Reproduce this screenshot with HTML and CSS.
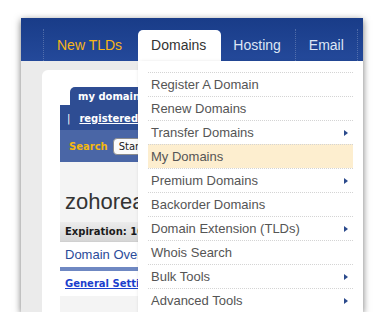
FILE: index.html
```html
<!DOCTYPE html>
<html>
  <head>
    <meta charset="UTF-8">
    <title>Domains</title>
	<link rel="stylesheet" href="styles.css">
  </head>
  <body>

	<div class="shot">

	<div class="nav">
		<span class="sep"></span>
		<a class="nav-item new-tlds">New TLDs</a>
		<a class="nav-item tab">Domains</a>
		<a class="nav-item hosting">Hosting</a>
		<span class="sep"></span>
		<a class="nav-item email">Email</a>
		<span class="sep"></span>
	</div>

	<div class="main">
		<div class="panel">
			<div class="acct">
				<div class="acct-tab">my domains</div>
				<div class="acct-links"><span class="bar">|</span><a>registered domains</a></div>
				<div class="acct-search">
					<span class="search-label">Search</span>
					<button class="start">Start</button>
				</div>
				<div class="acct-body">
					<h1 class="domain">zohoreach.com</h1>
					<div class="expire">Expiration: 10/24/2015</div>
					<div class="overview">Domain Overview</div>
					<div class="rule"></div>
					<div class="settings"><a>General Settings</a></div>
				</div>
			</div>
		</div>

		<ul class="menu">
			<li>Register A Domain</li>
			<li>Renew Domains</li>
			<li class="more">Transfer Domains<i></i></li>
			<li class="on">My Domains</li>
			<li class="more">Premium Domains<i></i></li>
			<li>Backorder Domains</li>
			<li class="more">Domain Extension (TLDs)<i></i></li>
			<li>Whois Search</li>
			<li class="more">Bulk Tools<i></i></li>
			<li class="more">Advanced Tools<i></i></li>
		</ul>
	</div>

	</div>

  </body>
</html>
```

FILE: styles.css
```css
 * {
	margin: 0px;
	padding: 0px;
	box-sizing: border-box;
 }
 body {
	background-color: #ffffff;
	font-family: "Liberation Sans", Arial, sans-serif;
 }
 .shot {
	margin: 18px 0 0 21px;
	width: 342px;
	height: 294px;
	background-color: #ebebeb;
	box-shadow: 0 2px 7px rgba(0, 0, 0, 0.55);
	display: flex;
	flex-direction: column;
	overflow: hidden;
 }

 /* top bar */
 .nav {
	height: 43px;
	flex: none;
	display: flex;
	align-items: flex-end;
	padding-left: 22px;
	background: linear-gradient(#193c88, #24499a);
 }
 .sep {
	width: 1px;
	height: 32px;
	border-left: 1px dotted rgba(255, 255, 255, 0.22);
 }
 .nav-item {
	height: 31px;
	line-height: 31px;
	font-size: 14px;
	color: #dde6f5;
	white-space: nowrap;
 }
 .new-tlds {
	color: #f7b518;
	padding: 0 16px 0 13px;
 }
 .tab {
	background-color: #ffffff;
	color: #333333;
	border-radius: 5px 5px 0 0;
	padding: 0 15px 0 13px;
 }
 .hosting {
	padding: 0 14px 0 12px;
 }
 .email {
	padding: 0 13px 0 13px;
 }

 /* page below the bar */
 .main {
	flex: 1;
	display: flex;
	position: relative;
	padding-left: 21px;
 }
 .panel {
	flex: 1;
	margin-top: 9px;
	background-color: #ffffff;
	border-top-left-radius: 6px;
	padding: 17px 0 0 18px;
 }
 .acct {
	width: 78px;
	height: 100%;
	overflow: hidden;
	display: flex;
	flex-direction: column;
	font-family: "DejaVu Sans", Verdana, sans-serif;
	font-size: 10px;
	font-weight: bold;
 }
 .acct-tab {
	margin-left: 10px;
	height: 18px;
	line-height: 19px;
	padding-left: 8px;
	color: #ffffff;
	background-color: #2e4d93;
	border-top-left-radius: 5px;
	white-space: nowrap;
 }
 .acct-links {
	height: 25px;
	line-height: 27px;
	padding-left: 7px;
	color: #ffffff;
	background-color: #2e4d93;
	white-space: nowrap;
 }
 .acct-links .bar {
	font-weight: normal;
	margin-right: 9px;
 }
 .acct-links a {
	text-decoration: underline;
 }
 .acct-search {
	height: 32px;
	display: flex;
	align-items: center;
	padding-left: 9px;
	background-color: #4a66a6;
	white-space: nowrap;
 }
 .search-label {
	color: #f5b90f;
	margin-right: 5px;
	margin-top: 1px;
 }
 .start {
	flex: none;
	height: 17px;
	padding: 0 5px;
	border: 1px solid #8d8d8d;
	border-radius: 4px;
	background-color: #fbfbfb;
	font-family: "DejaVu Sans", Verdana, sans-serif;
	font-size: 10px;
	color: #222222;
 }
 .acct-body {
	flex: 1;
	background-color: #f4f4f4;
 }
 .domain {
	font-family: "Liberation Sans", Arial, sans-serif;
	font-weight: normal;
	font-size: 22px;
	line-height: 22px;
	color: #333333;
	padding-left: 5px;
	margin: 29px 0 9px;
	white-space: nowrap;
 }
 .expire {
	height: 20px;
	line-height: 20px;
	padding-left: 5px;
	color: #1a1a1a;
	background: linear-gradient(#ececec, #d6d6d6);
	border-bottom: 1px solid #d0d0d0;
	white-space: nowrap;
 }
 .overview {
	height: 25px;
	line-height: 25px;
	padding-left: 5px;
	font-family: "Liberation Sans", Arial, sans-serif;
	font-weight: normal;
	font-size: 13px;
	color: #2b4b99;
	background-color: #ffffff;
	white-space: nowrap;
 }
 .rule {
	height: 4px;
	background-color: #6f88c2;
 }
 .settings {
	height: 25px;
	line-height: 25px;
	padding-left: 5px;
	color: #1c3fcd;
	background-color: #ffffff;
	white-space: nowrap;
 }
 .settings a {
	text-decoration: underline;
 }

 /* dropdown */
 .menu {
	position: absolute;
	top: 0;
	left: 117px;
	width: 225px;
	bottom: 0;
	list-style: none;
	background-color: #ffffff;
	padding: 11px 10px 0 10px;
	box-shadow: 2px 2px 4px rgba(0, 0, 0, 0.3);
 }
 .menu li {
	height: 24px;
	line-height: 23px;
	border-top: 1px dotted #d4d4d4;
	padding: 0 5px 0 3px;
	font-size: 13px;
	color: #555555;
	display: flex;
	align-items: center;
	justify-content: space-between;
 }
 .menu li.on {
	background-color: #fdeecf;
 }
 .menu li i {
	width: 0;
	height: 0;
	border-left: 4px solid #2b4a8c;
	border-top: 3.5px solid transparent;
	border-bottom: 3.5px solid transparent;
 }
```
